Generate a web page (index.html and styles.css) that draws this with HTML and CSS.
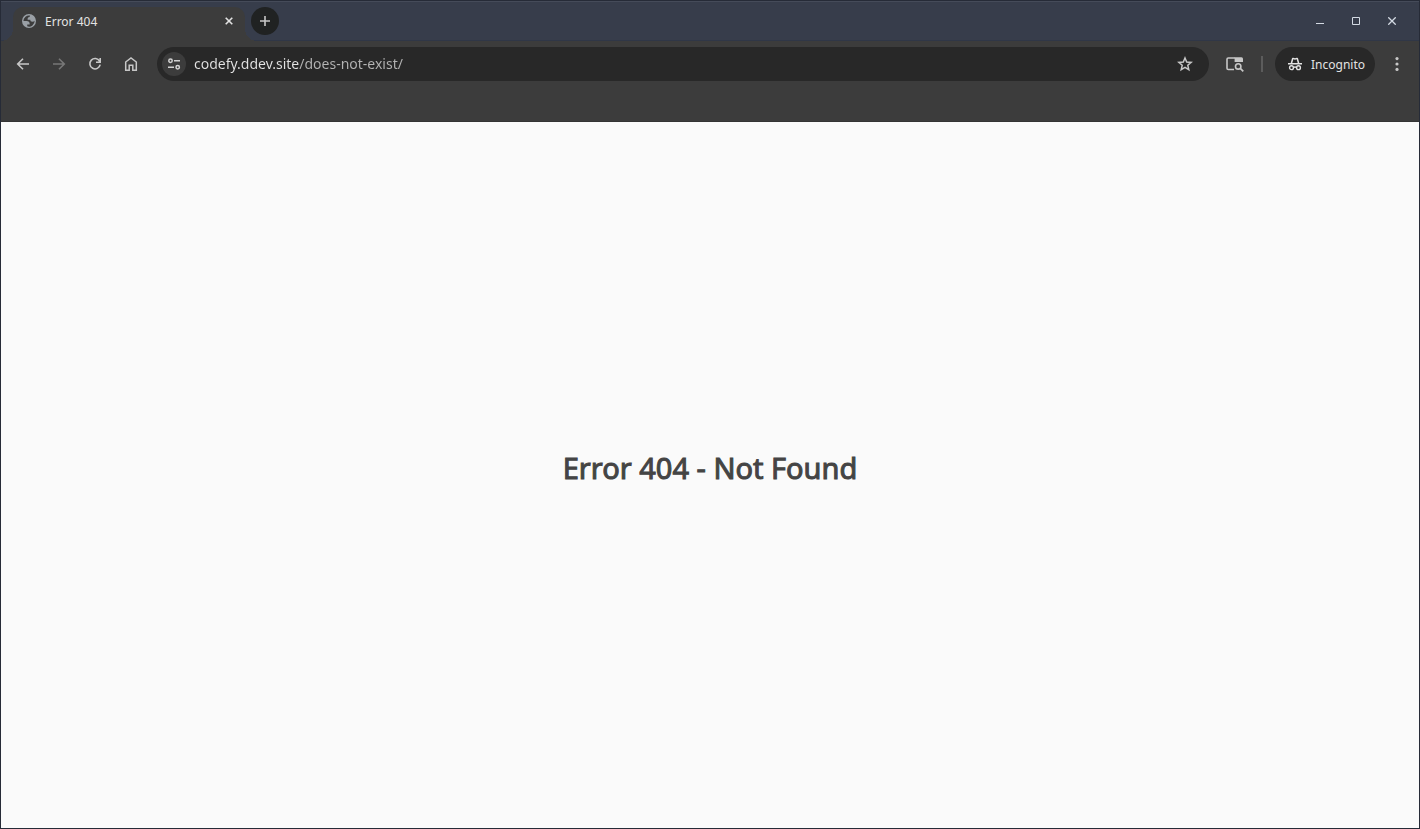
FILE: index.html
```html
<!DOCTYPE html>
<html lang="en">
<head>
    <meta charset="UTF-8">
    <meta name="viewport" content="width=device-width, initial-scale=1.0">
    <title>Error 404</title>
    <link rel="stylesheet" href="styles.css">
</head>
<body>
    <div class="window">
        <header class="titlebar">
            <div class="tab">
                <svg width="14" height="14" viewBox="2 2 20 20">
                    <path fill="#9aa0a6" fill-rule="evenodd" d="M12 2a10 10 0 1 0 0 20 10 10 0 0 0 0-20zM4 12h4.400c3.407.022 4.922 1.730 4.543 5.127H9.488v2.470a8.004 8.004 0 0 0 10.498-8.083C19.327 12.504 18.332 13 17 13c-2.137 0-3.206-.916-3.206-2.750h-3.748c-.274-2.728.683-4.092 2.870-4.092 0-.975.327-1.597.811-1.970A8.004 8.004 0 0 0 4 12z"/>
                </svg>
                <span class="tab-title">Error 404</span>
                <button class="tab-close" aria-label="Close tab">
                    <svg width="8" height="8" viewBox="0 0 8 8"><path d="M.7.7l6.600 6.600M7.300.7L.7 7.300" stroke="#e3e3e3" stroke-width="1.600"/></svg>
                </button>
            </div>
            <button class="new-tab" aria-label="New tab">
                <svg width="10" height="10" viewBox="0 0 10 10"><path d="M5 0v10M0 5h10" stroke="#c7c7c7" stroke-width="1.600"/></svg>
            </button>
            <div class="window-controls">
                <button aria-label="Minimize"><svg width="8" height="8" viewBox="0 0 8 8"><path d="M0 6.500h8" stroke="#d3dae3"/></svg></button>
                <button aria-label="Maximize"><svg width="8" height="8" viewBox="0 0 8 8"><path d="M.5.5h7v7h-7z" fill="none" stroke="#d3dae3"/></svg></button>
                <button aria-label="Close"><svg width="8" height="8" viewBox="0 0 8 8"><path d="M.3.3l7.400 7.400M7.700.3L.3 7.700" stroke="#d3dae3" stroke-width="1.300"/></svg></button>
            </div>
        </header>

        <nav class="toolbar">
            <div class="nav-buttons">
                <button aria-label="Back">
                    <svg width="16" height="16" viewBox="0 0 16 16"><path d="M14 8H3M8 2.700L2.700 8 8 13.300" fill="none" stroke="#c7c7c7" stroke-width="1.600"/></svg>
                </button>
                <button aria-label="Forward" disabled>
                    <svg width="16" height="16" viewBox="0 0 16 16"><path d="M2 8h11M8 2.700L13.300 8 8 13.300" fill="none" stroke="#777" stroke-width="1.600"/></svg>
                </button>
                <button aria-label="Reload">
                    <svg width="16" height="16" viewBox="0 0 16 16"><path d="M12.600 5.100A5.200 5.200 0 1 0 13.200 8.700M13.200 2v4.200H9" fill="none" stroke="#c7c7c7" stroke-width="1.600"/></svg>
                </button>
                <button aria-label="Home">
                    <svg width="16" height="16" viewBox="0 0 16 16"><path d="M2.700 6L8 2l5.300 4v8.200H9.800V9.300H6.200v4.900H2.700z" fill="none" stroke="#c7c7c7" stroke-width="1.500"/></svg>
                </button>
            </div>

            <form class="omnibox">
                <button type="button" class="site-info" aria-label="View site information">
                    <svg width="14" height="14" viewBox="0 0 14 14" fill="none" stroke="#d3d3d3" stroke-width="1.500">
                        <circle cx="3.500" cy="3.800" r="1.700"/>
                        <path d="M7 3.800h6M1 10.200h6"/>
                        <circle cx="10.700" cy="10.200" r="1.700"/>
                    </svg>
                </button>
                <input type="text" class="address" aria-label="Address and search bar" value="codefy.ddev.site/does-not-exist/" spellcheck="false">
                <button type="button" class="bookmark" aria-label="Bookmark this tab">
                    <svg width="16" height="16" viewBox="0 0 16 16"><path d="M8 2l1.700 4 4.500.4-3.400 2.900 1 4.300L8 11.300l-3.800 2.300 1-4.300L1.800 6.400 6.300 6z" fill="none" stroke="#c7c7c7" stroke-width="1.500"/></svg>
                </button>
            </form>

            <button class="side-search" aria-label="Search side panel">
                <svg width="20" height="16" viewBox="0 0 20 16">
                    <path d="M9 13.500H3.300Q2 13.500 2 12.200V3.300Q2 2 3.300 2H10" fill="none" stroke="#c7c7c7" stroke-width="1.600"/>
                    <path d="M9.600 1.200h6.900q1.500 0 1.500 1.500V6H9.600z" fill="#c7c7c7"/>
                    <circle cx="13.200" cy="10.400" r="2.700" fill="none" stroke="#c7c7c7" stroke-width="1.600"/>
                    <path d="M15 12.200l3.300 3.200" stroke="#c7c7c7" stroke-width="1.700"/>
                </svg>
            </button>
            <span class="divider"></span>
            <button class="incognito">
                <svg width="16" height="16" viewBox="0 0 16 16">
                    <path d="M3.700 7L5 2.300Q5.200 1.400 6.200 1.700L8 2.200l1.800-.5q1-.3 1.200.6L12.300 7h2.700v1.500H1V7z" fill="#e3e3e3"/>
                    <path d="M5.300 7l1-3.700L8 3.800l1.700-.5 1 3.700z" fill="#282828"/>
                    <g fill="none" stroke="#e3e3e3" stroke-width="1.400">
                        <circle cx="4.500" cy="11.700" r="1.900"/>
                        <circle cx="11.500" cy="11.700" r="1.900"/>
                        <path d="M6.400 11.400q1.600-.8 3.200 0"/>
                    </g>
                </svg>
                <span>Incognito</span>
            </button>
            <button class="menu" aria-label="Menu">
                <svg width="4" height="16" viewBox="0 0 4 16" fill="#c7c7c7"><circle cx="2" cy="2.600" r="1.600"/><circle cx="2" cy="8" r="1.600"/><circle cx="2" cy="13.400" r="1.600"/></svg>
            </button>
        </nav>
        <div class="bookmarks-bar"></div>

        <main class="page">
            <h1>Error 404 - Not Found</h1>
        </main>
    </div>
</body>
</html>
```

FILE: styles.css
```css
* {
    box-sizing: border-box;
}

body {
    margin: 0;
    font-family: "Noto Sans", sans-serif;
    background-color: #262b37;
}

button {
    display: flex;
    align-items: center;
    justify-content: center;
    flex-shrink: 0;
    padding: 0;
    border: none;
    background: none;
    font-family: inherit;
}

svg {
    display: block;
}

.window {
    display: flex;
    flex-direction: column;
    min-height: 100vh;
    border: 1px solid #262b37;
}

/* Title bar */
.titlebar {
    display: flex;
    height: 40px;
    padding: 5px 9px 0 12px;
    background-color: #373d4b;
    border-top: 1px solid #454b59;
    border-bottom: 1px solid #303747;
}
.tab {
    position: relative;
    display: flex;
    align-items: center;
    width: 232px;
    height: 34px;
    padding: 0 10px 6px 9px;
    border-radius: 10px 10px 0 0;
    background-color: #3c3c3c;
}
/* curved feet of the active tab */
.tab::before, .tab::after {
    content: "";
    position: absolute;
    bottom: 0;
    width: 12px;
    height: 12px;
}
.tab::before {
    left: -12px;
    background: radial-gradient(circle at 0 0, transparent 12px, #3c3c3c 12px);
}
.tab::after {
    right: -12px;
    background: radial-gradient(circle at 100% 0, transparent 12px, #3c3c3c 12px);
}
.tab-title {
    flex: 1;
    margin-left: 9px;
    font-size: 12px;
    color: #e3e3e3;
}
.tab-close {
    width: 12px;
    height: 16px;
}
.new-tab {
    width: 28px;
    height: 28px;
    margin-left: 6px;
    border-radius: 50%;
    background-color: #202222;
}
.window-controls {
    display: flex;
    margin-left: auto;
}
.window-controls button {
    width: 36px;
    height: 28px;
}

/* Toolbar */
.toolbar {
    display: flex;
    align-items: center;
    height: 46px;
    padding: 0 8px 0 4px;
    background-color: #3c3c3c;
}
.nav-buttons {
    display: flex;
}
.nav-buttons button {
    width: 36px;
    height: 34px;
}
.omnibox {
    display: flex;
    flex: 1;
    align-items: center;
    height: 34px;
    margin-left: 8px;
    padding: 0 12px 0 5px;
    border-radius: 17px;
    background-color: #282828;
}
.site-info {
    width: 24px;
    height: 24px;
    border-radius: 50%;
    background-color: #3c3c3c;
}
/* host is brighter than the path */
.address {
    flex: 1;
    min-width: 0;
    padding: 0 0 2px;
    margin: 0 8px;
    border: none;
    outline: none;
    font-family: inherit;
    font-size: 14px;
    color: transparent;
    caret-color: #e3e3e3;
    background: linear-gradient(to right, #e3e3e3 105px, #b4b4b4 105px);
    -webkit-background-clip: text;
    background-clip: text;
}
.bookmark {
    width: 24px;
    height: 24px;
}
.side-search {
    width: 36px;
    height: 34px;
    margin-left: 8px;
}
.divider {
    width: 2px;
    height: 16px;
    margin: 0 12px 0 8px;
    background-color: #5c5c5c;
}
.incognito {
    gap: 8px;
    height: 34px;
    padding: 0 10px 0 12px;
    border-radius: 17px;
    background-color: #282828;
    color: #e3e3e3;
    font-size: 12px;
}
.menu {
    width: 28px;
    height: 34px;
    margin-left: 8px;
}
.bookmarks-bar {
    height: 35px;
    background-color: #3c3c3c;
    border-bottom: 1px solid #343434;
}

/* Page */
.page {
    display: flex;
    flex: 1;
    align-items: center;
    justify-content: center;
    background-color: #fafafa;
}
.page h1 {
    margin: 0;
    padding-bottom: 16px;
    font-size: 29px;
    font-weight: 400;
    color: #444;
    -webkit-text-stroke: 1px #444;
}
```
